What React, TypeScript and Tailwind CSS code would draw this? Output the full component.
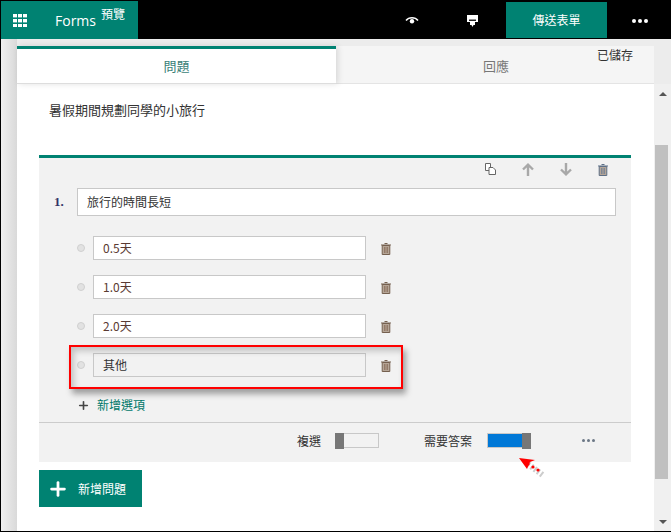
import { Plus } from "lucide-react";

const cjk = "font-['Noto_Sans_CJK_TC','Noto_Sans',sans-serif]";

function TrashIcon({ className, slats = "#6f7f94" }: { className?: string; slats?: string }) {
  return (
    <svg viewBox="0 0 12 13" className={className} fill="none">
      <path d="M4.5 1.5h3M1 3h10" stroke="currentColor" strokeWidth="1.2" />
      <path d="M2.2 3.5h7.6V12.5H2.2z" fill="#b5a596" stroke="currentColor" strokeWidth="1" />
      <path d="M4.5 5v6M6 5v6M7.5 5v6" stroke={slats} strokeWidth="0.8" />
    </svg>
  );
}

function Waffle() {
  return (
    <svg viewBox="0 0 14 13" className="w-[14px] h-[13px]" fill="#fff">
      {[0, 5, 10].map((y) =>
        [0, 5, 10].map((x) => <rect key={`${x}-${y}`} x={x} y={y} width="4" height="3.4" />),
      )}
    </svg>
  );
}

function Dots({ className }: { className: string }) {
  return (
    <div className="flex gap-[2px]">
      <span className={`rounded-full ${className}`} />
      <span className={`rounded-full ${className}`} />
      <span className={`rounded-full ${className}`} />
    </div>
  );
}

function Option({ label, muted }: { label: string; muted?: boolean }) {
  return (
    <div className="flex items-center h-[24px] mb-[15px]">
      <span className="w-[8px] h-[8px] ml-[38px] rounded-full bg-[#e2e2e2] border border-[#d0d0d0]" />
      <div
        className={`ml-[8px] w-[273px] h-[24px] flex items-center pl-[9px] border border-[#c8c8c8] text-[12px] ${
          muted ? "bg-[#f2f2f2] text-[#333]" : "bg-white text-[#5a3a32]"
        }`}
      >
        {label}
      </div>
      <TrashIcon className="ml-[14px] w-[12px] h-[13px] text-[#75604f]" slats="#8a6f5c" />
    </div>
  );
}

export default function App() {
  return (
    <div className={`relative w-[671px] h-[532px] overflow-hidden border-l border-b border-black bg-white flex flex-col ${cjk}`}>
      <header className="h-[39px] shrink-0 bg-black flex items-start text-white">
        <div className="w-[137px] h-[38px] mt-px bg-[#008272] flex items-center pl-[12px]">
          <Waffle />
          <span className="ml-[28px] text-[14px] font-['Open_Sans',sans-serif]">Forms</span>
          <span className="ml-[5px] mb-[13px] text-[12px] leading-none">預覽</span>
        </div>
        <svg viewBox="0 0 14 8" className="ml-[267px] mt-[16px] w-[14px] h-[8px]" fill="none">
          <path d="M1 4.5C4 .8 10 .8 13 4.5" stroke="#fff" strokeWidth="1.5" />
          <circle cx="7" cy="5.2" r="2.2" fill="#fff" />
        </svg>
        <svg viewBox="0 0 11 12" className="ml-[48px] mt-[15px] w-[11px] h-[12px]">
          <path d="M0 0h11v7H8v3H6.5L5.5 12l-1-2H3V7H0z" fill="#fff" />
          <path d="M2 4.5h7V6H2z" fill="#222" />
        </svg>
        <div className="ml-[28px] mt-[2px] w-[101px] h-[36px] bg-[#008272] flex items-center justify-center text-[12px]">
          傳送表單
        </div>
        <div className="ml-[25px] mt-[19px]">
          <Dots className="w-[4px] h-[4px] bg-white" />
        </div>
      </header>

      <div className="flex-1 min-h-0 flex">
        <div className="w-[16px] shrink-0 bg-gradient-to-r from-[#efefef] to-[#d9d9d9]" />

        <main className="flex-1 min-w-0 bg-white flex flex-col">
          <div className="h-[45px] shrink-0 flex items-end bg-[#ececec]">
            <div className="relative w-[319px] h-[38px] bg-white border-t-[3px] border-b border-t-[#008272] border-b-[#dddddd] shadow-[2px_0_6px_rgba(0,0,0,0.12)] flex items-center justify-center text-[13px] text-[#3b7f78]">
              問題
            </div>
            <div className="flex-1 h-[38px] pt-[3px] pl-[2px] bg-[#f5f5f5] border-b border-[#e4e4e4] flex items-center justify-center text-[13px] text-[#777]">
              回應
            </div>
          </div>

          <p className="pl-[32px] pt-[18px] h-[71px] shrink-0 text-[13px] leading-[16px] text-[#333]">暑假期間規劃同學的小旅行</p>

          <section className="ml-[22px] w-[592px] h-[307px] shrink-0 bg-[#f2f2f2] border-t-[3px] border-[#008272] flex flex-col">
            <div className="h-[30px] flex items-start pt-[5px]">
              <svg viewBox="0 0 11 12" className="ml-[446px] w-[11px] h-[12px]" fill="#fff" stroke="#666">
                <path d="M.5.5h5v7h-5z" />
                <path d="M4 4.5h4l2.5 2.5v4.5H4z" />
              </svg>
              <svg viewBox="0 0 12 13" className="ml-[26px] w-[12px] h-[13px]" fill="none" stroke="#a8a8a8" strokeWidth="2.4">
                <path d="M6 13V2M1 6.5 6 1.7l5 4.8" />
              </svg>
              <svg viewBox="0 0 12 13" className="ml-[26px] w-[12px] h-[13px]" fill="none" stroke="#a8a8a8" strokeWidth="2.4">
                <path d="M6 0v11M1 6.5l5 4.8 5-4.8" />
              </svg>
              <TrashIcon className="ml-[25px] w-[12px] h-[13px] text-[#5d6f86]" />
            </div>

            <div className="flex items-center h-[28px] mb-[20px]">
              <span className="ml-[15px] w-[23px] text-[13px] font-bold font-['Liberation_Serif',serif] text-[#333366]">1.</span>
              <div className="w-[539px] h-[28px] flex items-center pl-[9px] bg-white border border-[#c8c8c8] text-[12px] text-[#333]">
                旅行的時間長短
              </div>
            </div>

            <Option label="0.5天" />
            <Option label="1.0天" />
            <Option label="2.0天" />
            <Option label="其他" muted />

            <div className="flex items-center h-[14px] mt-[6px] ml-[38px] text-[12px] text-[#00786a]">
              <Plus className="w-[13px] h-[13px] text-[#444]" strokeWidth={3} />
              <span className="ml-[7px]">新增選項</span>
            </div>

            <div className="mt-[10px] flex-1 pb-[4px] border-t border-[#cccccc] flex items-center text-[12px] text-[#333]">
              <span className="ml-[258px]">複選</span>
              <div className="ml-[14px] w-[44px] h-[15px] flex border border-[#c8c8c8] bg-[#f2f2f2]">
                <span className="w-[9px] -my-px -ml-px h-[16px] bg-[#777]" />
              </div>
              <span className="ml-[45px]">需要答案</span>
              <div className="ml-[15px] w-[44px] h-[15px] flex justify-end bg-[#0078d7] border border-[#c8c8c8]">
                <span className="w-[9px] -my-px -mr-px h-[16px] bg-[#777]" />
              </div>
              <div className="ml-[51px]">
                <Dots className="w-[3px] h-[3px] bg-[#6b7785]" />
              </div>
            </div>
          </section>

          <button className="mt-[8px] ml-[22px] w-[103px] h-[37px] bg-[#008272] text-white flex items-center text-[12px]">
            <Plus className="ml-[8px] w-[22px] h-[22px]" strokeWidth={3} />
            <span className="ml-[9px]">新增問題</span>
          </button>
        </main>

        <aside className="w-[17px] shrink-0 flex flex-col bg-[#f0f0f0]">
          <div className="h-[45px] shrink-0 bg-[#ececec]" />
          <div className="h-[61px] shrink-0 flex justify-center pt-[8px]">
            <span className="w-0 h-0 border-x-[4px] border-x-transparent border-b-[4px] border-b-[#555]" />
          </div>
          <div className="ml-px w-[13px] h-[334px] shrink-0 bg-[#c0c0c0]" />
          <div className="flex-1 flex justify-center items-end pb-[7px]">
            <span className="w-0 h-0 border-x-[4px] border-x-transparent border-t-[4px] border-t-[#555]" />
          </div>
        </aside>
      </div>

      {/* saved label sits over the tab bar */}
      <span className="absolute left-[596px] top-[47px] text-[12px] leading-[16px] text-[#333]">已儲存</span>

      {/* red callout drawn on top of the screenshot */}
      <div className="absolute left-[68px] top-[345px] w-[334px] h-[44px] border-2 border-[#ff0000] shadow-[3px_5px_6px_rgba(0,0,0,0.35),inset_3px_4px_6px_rgba(0,0,0,0.2)]" />
      <svg viewBox="0 0 34 28" className="absolute left-[517px] top-[456px] w-[34px] h-[28px]">
        <path d="M10 8l16 12" stroke="#000" strokeOpacity="0.2" strokeWidth="6" strokeDasharray="2 2" />
        <path d="M1 2l16 2-5 2-3 7z" fill="#ff0000" />
        <circle cx="10" cy="8" r="1.6" fill="#ff0000" />
        <circle cx="15" cy="11" r="1.6" fill="#ff0000" />
        <circle cx="20" cy="14" r="1.6" fill="#ff0000" />
      </svg>
    </div>
  );
}
